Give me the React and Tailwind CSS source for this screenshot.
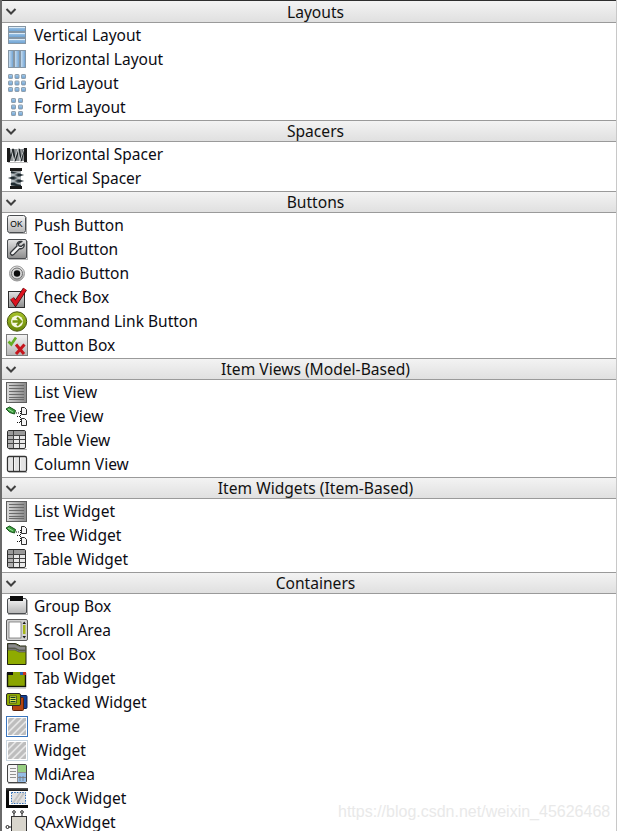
const Blue = ({ x, y, w, h }) => (
  <g>
    <rect x={x + 0.5} y={y + 0.5} width={w - 1} height={h - 1} fill="url(#blueFill)" stroke="#8596a5" />
    <rect x={x + 1} y={y + 1} width={w - 2} height="1" fill="#dcebf7" />
  </g>
);

const BlueV = ({ x, y, w, h }) => (
  <rect x={x + 0.5} y={y + 0.5} width={w - 1} height={h - 1} fill="url(#blueSide)" stroke="#8596a5" />
);

const VerticalLayout = () => (
  <>
    <Blue x={3} y={3} w={18} h={6} />
    <Blue x={3} y={9} w={18} h={6} />
    <Blue x={3} y={15} w={18} h={6} />
  </>
);

const HorizontalLayout = () => (
  <>
    <BlueV x={3} y={3} w={6} h={18} />
    <BlueV x={9} y={3} w={6} h={18} />
    <BlueV x={15} y={3} w={6} h={18} />
  </>
);

const Cell = ({ x, y }) => (
  <rect x={x + 0.5} y={y + 0.5} width="4" height="4" rx="0.6" fill="url(#blueFill)" stroke="#8f9eab" />
);

const GridLayout = () => (
  <>
    {[3, 9.5, 16].map((y) => [3, 9.5, 16].map((x) => <Cell key={`${x}-${y}`} x={x} y={y} />))}
  </>
);

const FormLayout = () => (
  <>
    {[3, 9.5, 16].map((y) => [6, 13].map((x) => <Cell key={`${x}-${y}`} x={x} y={y} />))}
  </>
);

const HorizontalSpacer = () => (
  <>
    <rect x="3" y="7" width="18" height="12" fill="#8f9396" />
    <path d="M4 19 8 7l2 12 4-12 2 12 3-12" fill="none" stroke="#22282b" strokeWidth="1.800" />
    <path d="M6 7l3 12 4-12 2 12 4-12" fill="none" stroke="#dfe3e5" strokeWidth="0.800" />
    <rect x="2" y="6" width="3" height="14" fill="#1a1a1a" />
    <rect x="19" y="6" width="3" height="14" fill="#1a1a1a" />
    <rect x="3" y="20" width="20" height="1" fill="#bdbdbd" />
  </>
);

const VerticalSpacer = () => (
  <>
    <path d="M6 4h10v17H6z" fill="#8f9396" />
    <path d="M6 6l10 3-10 3 10 3-10 3 10 2" fill="none" stroke="#1e2a30" strokeWidth="1.800" />
    <path d="M16 6 6 9l10 3-10 3 10 3" fill="none" stroke="#c4ced3" strokeWidth="0.800" />
    <rect x="5" y="2" width="12" height="3" fill="#1a1a1a" />
    <rect x="5" y="20" width="12" height="3" fill="#1a1a1a" />
  </>
);

const PushButton = () => (
  <>
    <rect x="2.500" y="2.500" width="18" height="17" rx="2" fill="url(#grayBtn)" stroke="#4a4d50" />
    <path d="M4 20.500h18M21.500 4v16" stroke="#aeaeae" />
    <text x="11.500" y="13.500" textAnchor="middle" fontSize="8.500" fontFamily="Liberation Sans, sans-serif" fill="#000">OK</text>
  </>
);

const ToolButton = () => (
  <>
    <rect x="2.500" y="2.500" width="19" height="19" rx="1.500" fill="url(#grayDark)" stroke="#4a4d50" />
    <path d="M4 22.500h19M22.500 4v18" stroke="#b5b5b5" />
    <path d="M17 4.500c-3-.8-5.800 1.200-5 4.500l-6 6c-1.600 1.800.8 4.200 2.600 2.600l6-6c3 .8 5.200-1.800 4.400-4.600l-2.800 2.500-2.300-.6-.5-2.100z" fill="#f4f4f4" stroke="#34373a" strokeWidth="1.300" strokeLinejoin="round" />
  </>
);

const RadioButton = () => (
  <>
    <circle cx="12" cy="12.500" r="7.500" fill="url(#radioFill)" stroke="#9a9a9a" />
    <circle cx="12" cy="12.500" r="5.500" fill="#d5d5d5" stroke="#6e6e6e" />
    <circle cx="12" cy="12.500" r="3.200" fill="#0c0c0c" />
  </>
);

const CheckBox = () => (
  <>
    <rect x="3.500" y="6.500" width="16" height="16" fill="url(#grayDark)" stroke="#2e2e2e" />
    <path d="M7 13.500l3.500 5L20 4" fill="none" stroke="#3a1010" strokeWidth="4.600" />
    <path d="M7 13.500l3.500 5L20 4" fill="none" stroke="#dc1420" strokeWidth="3.200" />
  </>
);

const CommandLink = () => (
  <>
    <circle cx="12" cy="12.500" r="9.700" fill="url(#greenFill)" stroke="#47550c" />
    <circle cx="12" cy="12.500" r="6" fill="#f6f8e2" />
    <path d="M7.500 12.500h8M12 8.500l4 4-4 4" fill="none" stroke="#779610" strokeWidth="2.300" />
  </>
);

const ButtonBox = () => (
  <>
    <rect x="1.500" y="1.500" width="21" height="21" fill="url(#grayBtn)" stroke="#7d7d7d" />
    <path d="M3.500 8.500l2.800 3L11 4.500" fill="none" stroke="#66ad24" strokeWidth="2.600" />
    <path d="M11 11.500l8 9.500M19.500 11.500l-8.500 9.500" fill="none" stroke="#c5161d" strokeWidth="3" />
  </>
);

const ListIcon = () => (
  <>
    <rect x="1.500" y="2.500" width="20" height="20" fill="url(#listFill)" stroke="#5e5e5e" />
    <rect x="3" y="4" width="17" height="17" fill="url(#listFill)" />
    {[5, 8, 11, 14, 17, 19].map((y) => (
      <path key={y} d={`M4 ${y + 0.5}h15`} stroke="#6a6a6a" />
    ))}
  </>
);

const TreeIcon = () => (
  <>
    <path d="M1 5 4.500 3l6 3.500-1 3.500-5-1.500z" fill="#3d9f3d" stroke="#16501a" />
    <path d="M3 5l5 3" stroke="#b8e8b8" strokeWidth="0.800" />
    <path d="M11 9h3M15.500 7v11M12 12.500h3M12 18.500h3" fill="none" stroke="#111" strokeDasharray="1 1" />
    <path d="M16.500 3.500h3l2 2v5h-5z" fill="#f4f4f4" stroke="#2e2e2e" />
    <path d="M16.500 14.500h3l2 2v5h-5z" fill="#f4f4f4" stroke="#2e2e2e" />
  </>
);

const TableIcon = () => (
  <>
    <rect x="2.500" y="2.500" width="18" height="18" rx="1.500" fill="#e9e9e9" stroke="#2e2e2e" />
    <rect x="3" y="3" width="17" height="4" fill="#9a9a9a" />
    <rect x="3" y="7" width="5" height="13" fill="#b0b0b0" />
    <path d="M8.500 3v17M14.500 7v13M3 7.500h17M3 11.500h17M3 15.500h17" stroke="#444" />
    <path d="M4 21.500h18" stroke="#b5b5b5" />
  </>
);

const ColumnIcon = () => (
  <>
    <rect x="2.500" y="4.500" width="19" height="15" rx="1.500" fill="#f5f5f5" stroke="#333" strokeWidth="1.300" />
    <rect x="4" y="6" width="4" height="12" fill="#e4e4e4" />
    <rect x="10" y="6" width="4" height="12" fill="#e4e4e4" />
    <rect x="16" y="6" width="4" height="12" fill="#e4e4e4" />
    <path d="M8.500 5v14M14.500 5v14" stroke="#3e3e3e" />
    <path d="M4 20.500h18" stroke="#b5b5b5" />
  </>
);

const GroupBox = () => (
  <>
    <rect x="2.500" y="4.500" width="19" height="15" rx="1.500" fill="url(#grayBtn)" stroke="#4a4d50" />
    <rect x="5" y="2" width="13" height="5" fill="#0c0c0c" />
    <path d="M3 20.500h20M22.500 6v14" stroke="#b0b0b0" />
  </>
);

const ScrollArea = () => (
  <>
    <rect x="1.500" y="1.500" width="21" height="21" rx="1.500" fill="#d2d2d2" stroke="#5c5c5c" />
    <rect x="4" y="4" width="12" height="16" fill="#fff" stroke="#666" strokeWidth="0.700" />
    <rect x="18" y="7" width="2.500" height="9" fill="#a5b51a" />
    <path d="M17.500 6 19.200 3.500 21 6zM17.500 18l1.700 2.500 1.800-2.500z" fill="#1a1a1a" />
  </>
);

const ToolBox = () => (
  <>
    <path d="M2.500 1.500h8l5 2.500h5.500v18.500h-18.500z" fill="#8fab00" stroke="#20240c" />
    <path d="M3 2h7l5 2.500h5.500V8H14l-4-2H3zM3 6.500h7l4 2h6.500V10H14l-4-2H3z" fill="#8a8a8a" stroke="#4a4a4a" strokeWidth="0.700" />
  </>
);

const TabWidget = () => (
  <>
    <rect x="2.500" y="7.500" width="18" height="13" fill="#8aa400" stroke="#14180a" strokeWidth="1.400" />
    <rect x="2" y="6" width="6" height="3" fill="#111" />
    <rect x="8" y="6" width="7" height="3" fill="#8aa400" />
    <rect x="15" y="6" width="3" height="3" fill="#2764b0" />
    <rect x="18" y="6" width="3" height="3" fill="#c8331a" />
    <path d="M3 22h18" stroke="#aaa" />
  </>
);

const StackedWidget = () => (
  <>
    <rect x="13.500" y="5.500" width="8.500" height="13" rx="1" fill="#123f96" stroke="#0a1f50" />
    <rect x="7.500" y="7.500" width="11" height="13" rx="1" fill="#b44411" stroke="#5c2208" />
    <rect x="1.500" y="3.500" width="14" height="12" rx="1.500" fill="#8fab00" stroke="#2a2a2a" />
    <rect x="4.500" y="6" width="7" height="7" fill="#d9e34a" stroke="#222" strokeWidth="0.600" />
    <path d="M5.500 7.500h5M5.500 9.500h5M5.500 11.500h5" stroke="#142" />
  </>
);

const Hatch = ({ id, x, y, w, h }) => (
  <g>
    <rect x={x} y={y} width={w} height={h} fill="#e6e6e6" />
    <clipPath id={id}>
      <rect x={x} y={y} width={w} height={h} />
    </clipPath>
    <g clipPath={`url(#${id})`}>
      {[-14, -7, 0, 7, 14].map((d) => (
        <path key={d} d={`M${x + d} ${y + h + 1}L${x + d + h + 2} ${y - 1}`} stroke="#bdbdbd" strokeWidth="3.200" />
      ))}
    </g>
  </g>
);

const Frame = () => (
  <>
    <rect x="1.500" y="2.500" width="21" height="20" fill="#fff" stroke="#3a75bd" />
    <Hatch id="frameHatch" x={3} y={4} w={18} h={17} />
  </>
);

const WidgetIcon = () => (
  <>
    <rect x="1.500" y="2.500" width="21" height="20" fill="#fff" stroke="#cad6e0" />
    <Hatch id="widgetHatch" x={3} y={4} w={18} h={17} />
  </>
);

const MdiArea = () => (
  <>
    <rect x="2.500" y="2.500" width="19" height="18" rx="1.500" fill="#f5f5f5" stroke="#444" />
    <rect x="13" y="3" width="8" height="7" fill="#98cf82" />
    <rect x="13" y="11" width="8" height="9" fill="#94bce6" />
    <path d="M12.500 3v17M13 10.500h8M5 6.500h6M5 9.500h6M5 12.500h6M5 15.500h6M15 14v5M18 14v5M13 15.500h8" stroke="#777" strokeWidth="0.800" />
    <path d="M3 21.500h19" stroke="#b5b5b5" />
  </>
);

const DockWidget = () => (
  <>
    <rect x="1" y="2" width="22" height="20" fill="url(#dockFill)" />
    <rect x="4" y="5" width="19" height="14" fill="#fff" />
    <rect x="6.500" y="6.500" width="14" height="11" fill="#e0e0e0" stroke="#2f6db5" strokeDasharray="1.500 1.200" />
    <path d="M8 17 15 7M12 17l7-10" stroke="#c4c4c4" strokeWidth="2" />
  </>
);

const QAxWidget = () => (
  <>
    <path d="M9 6V2M17 6V2" stroke="#222" />
    <circle cx="9" cy="2" r="1.300" fill="#fff" stroke="#222" />
    <circle cx="17" cy="2" r="1.300" fill="#fff" stroke="#222" />
    <rect x="6.500" y="6.500" width="15" height="18" fill="#d8d5cc" stroke="#333" />
    <path d="M3 17h4" stroke="#222" />
    <circle cx="2.500" cy="17" r="1.500" fill="#fff" stroke="#222" />
  </>
);

const sections = [
  {
    title: 'Layouts',
    items: [
      ['Vertical Layout', VerticalLayout],
      ['Horizontal Layout', HorizontalLayout],
      ['Grid Layout', GridLayout],
      ['Form Layout', FormLayout],
    ],
  },
  {
    title: 'Spacers',
    items: [
      ['Horizontal Spacer', HorizontalSpacer],
      ['Vertical Spacer', VerticalSpacer],
    ],
  },
  {
    title: 'Buttons',
    items: [
      ['Push Button', PushButton],
      ['Tool Button', ToolButton],
      ['Radio Button', RadioButton],
      ['Check Box', CheckBox],
      ['Command Link Button', CommandLink],
      ['Button Box', ButtonBox],
    ],
  },
  {
    title: 'Item Views (Model-Based)',
    items: [
      ['List View', ListIcon],
      ['Tree View', TreeIcon],
      ['Table View', TableIcon],
      ['Column View', ColumnIcon],
    ],
  },
  {
    title: 'Item Widgets (Item-Based)',
    items: [
      ['List Widget', ListIcon],
      ['Tree Widget', TreeIcon],
      ['Table Widget', TableIcon],
    ],
  },
  {
    title: 'Containers',
    items: [
      ['Group Box', GroupBox],
      ['Scroll Area', ScrollArea],
      ['Tool Box', ToolBox],
      ['Tab Widget', TabWidget],
      ['Stacked Widget', StackedWidget],
      ['Frame', Frame],
      ['Widget', WidgetIcon],
      ['MdiArea', MdiArea],
      ['Dock Widget', DockWidget],
      ['QAxWidget', QAxWidget],
    ],
  },
];

function SectionHeader({ title, first }) {
  return (
    <div
      className={`relative flex items-center justify-center border-b border-[#9a9a9a] bg-gradient-to-b from-[#f3f3f3] to-[#e0e0e0] pl-[13px] text-[15.6px] text-[#111] ${first ? 'h-[23px] border-t border-t-[#2e2e2e] pt-[2px]' : 'mt-px h-[22px] border-t border-t-[#9a9a9a] pt-px'}`}
    >
      <svg className="absolute left-[3px] top-[6px]" width="12" height="9" viewBox="0 0 12 9">
        <path d="M1.500 2 6 6.500 10.500 2" fill="none" stroke="#404040" strokeWidth="2" />
      </svg>
      <span>{title}</span>
    </div>
  );
}

function Row({ label, Icon }) {
  return (
    <div className="flex h-6 items-center">
      <svg className="ml-[3px] shrink-0 overflow-visible" width="24" height="24" viewBox="0 0 24 24">
        <Icon />
      </svg>
      <span className="ml-[5px] text-[15.5px] leading-[23px] text-[#0c0c14]">{label}</span>
    </div>
  );
}

export default function App() {
  return (
    <div className="relative h-[831px] w-[618px] overflow-hidden bg-white font-['Noto_Sans',sans-serif]">
      <svg className="absolute h-0 w-0">
        <defs>
          <linearGradient id="blueFill" x1="0" y1="0" x2="0" y2="1">
            <stop offset="0" stopColor="#a9cdea" />
            <stop offset="1" stopColor="#6a9fd2" />
          </linearGradient>
          <linearGradient id="blueSide" x1="0" y1="0" x2="1" y2="0">
            <stop offset="0" stopColor="#cfe2f2" />
            <stop offset="1" stopColor="#6a9fd2" />
          </linearGradient>
          <linearGradient id="grayBtn" x1="0" y1="0" x2="0" y2="1">
            <stop offset="0" stopColor="#f5f5f5" />
            <stop offset="1" stopColor="#b4b4b4" />
          </linearGradient>
          <linearGradient id="grayDark" x1="0" y1="0" x2="0" y2="1">
            <stop offset="0" stopColor="#e4e4e4" />
            <stop offset="1" stopColor="#8c8c8c" />
          </linearGradient>
          <linearGradient id="radioFill" x1="0" y1="0" x2="0" y2="1">
            <stop offset="0" stopColor="#f0f0f0" />
            <stop offset="1" stopColor="#a0a0a0" />
          </linearGradient>
          <linearGradient id="listFill" x1="0" y1="0" x2="1" y2="0">
            <stop offset="0" stopColor="#d6d6d6" />
            <stop offset="1" stopColor="#8c8c8c" />
          </linearGradient>
          <linearGradient id="greenFill" x1="0" y1="0" x2="0" y2="1">
            <stop offset="0" stopColor="#a8c42a" />
            <stop offset="1" stopColor="#678608" />
          </linearGradient>
          <linearGradient id="dockFill" x1="0" y1="0" x2="0" y2="1">
            <stop offset="0" stopColor="#555" />
            <stop offset="0.150" stopColor="#111" />
            <stop offset="1" stopColor="#050505" />
          </linearGradient>
        </defs>
      </svg>
      <div className="w-[617px] border-l-2 border-l-[#6a6a6a] border-r border-r-[#c8c8c8]">
        {sections.map((section, i) => (
          <div key={section.title}>
            <SectionHeader title={section.title} first={i === 0} />
            {section.items.map(([label, Icon]) => (
              <Row key={label} label={label} Icon={Icon} />
            ))}
          </div>
        ))}
      </div>
      <div className="absolute left-[338px] top-[802px] font-['Liberation_Sans',sans-serif] text-[16px] leading-5 text-[#e9e9e9]">
        https://blog.csdn.net/weixin_45626468
      </div>
    </div>
  );
}
